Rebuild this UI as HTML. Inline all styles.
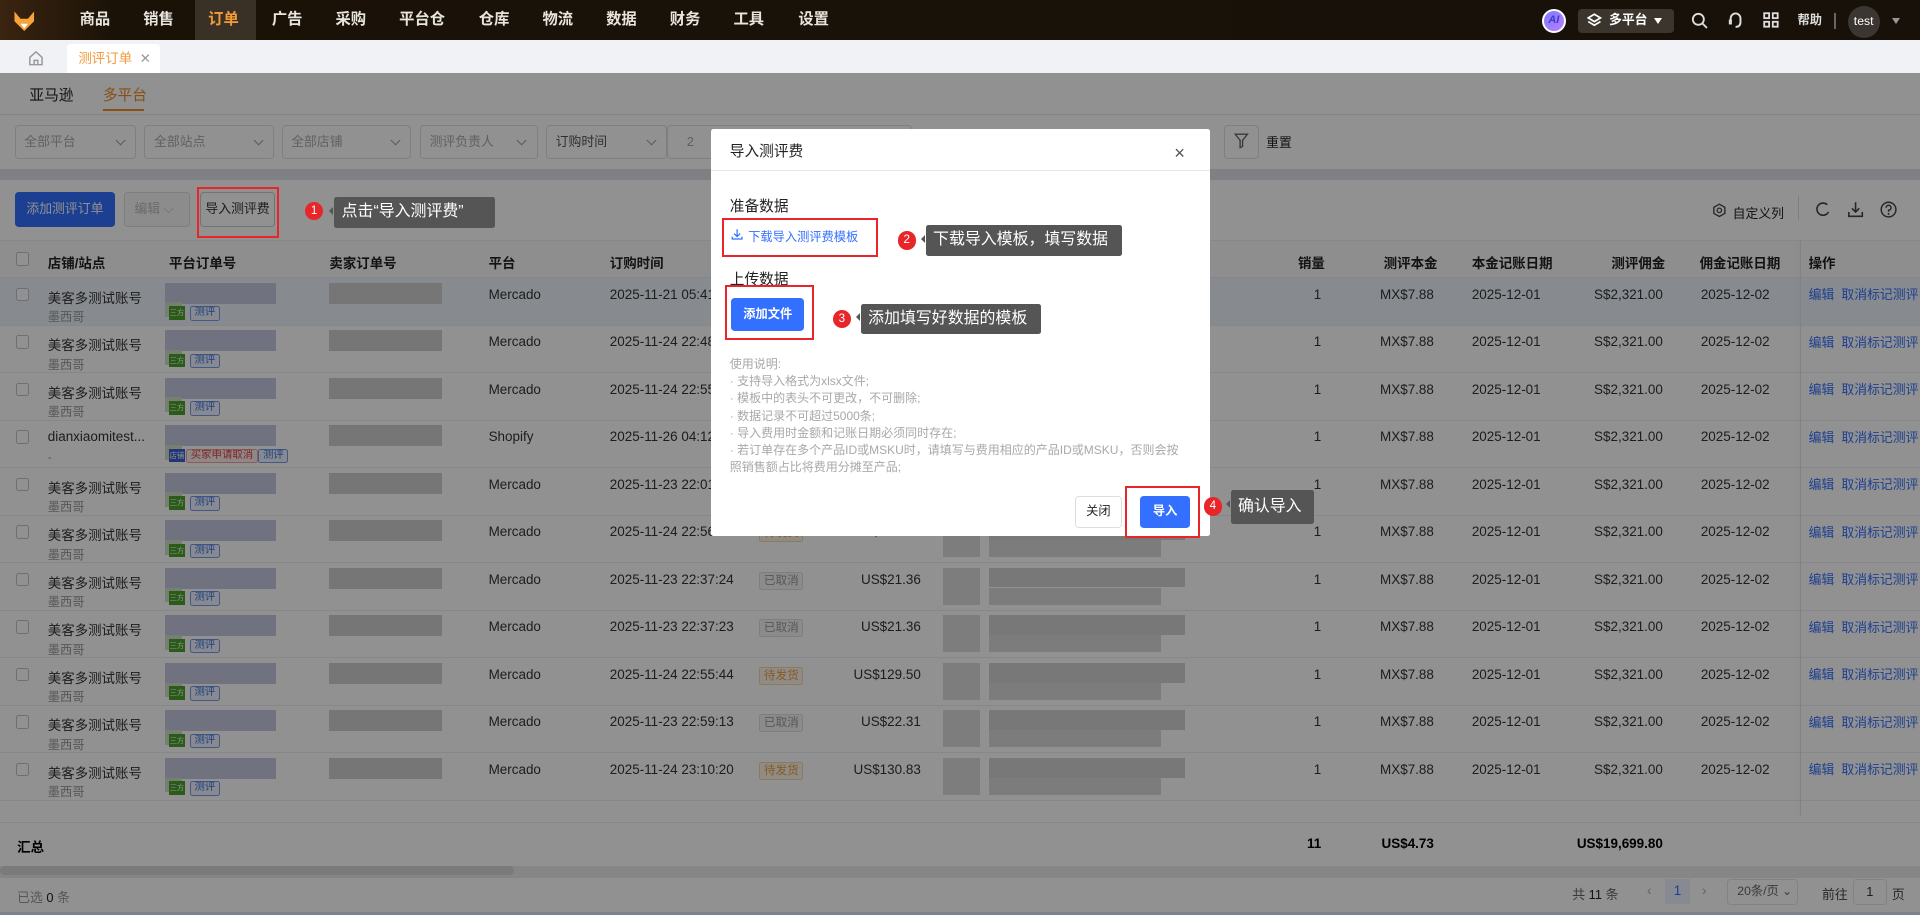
<!DOCTYPE html>
<html><head><meta charset="utf-8">
<style>
*{box-sizing:border-box;margin:0;padding:0}
html,body{width:1920px;height:915px;overflow:hidden;background:#fff}
body{font-family:"Liberation Sans","Noto Sans CJK SC",sans-serif;color:#333}
#w{position:absolute;left:0;top:0;width:1568px;height:747px;zoom:1.22449;overflow:hidden;background:#fff}
.a{position:absolute;white-space:nowrap}
#nav{position:absolute;left:0;top:0;width:1568px;height:33px;background:linear-gradient(90deg,#3a2410 0,#1a1207 6%,#17110a 100%)}
#nav .m{position:absolute;top:0;height:33px;line-height:33px;color:#e8e4de;font-size:12.5px;font-weight:bold}
#tabs{position:absolute;left:0;top:33px;width:1568px;height:27px;background:#f0f2f5}
.sel{position:absolute;top:102px;height:28px;border:1px solid #dcdfe6;border-radius:3px;background:#fff;font-size:10.5px;color:#aaa;line-height:26px;padding-left:7px}
.sel:after{content:"";position:absolute;right:9px;top:9px;width:5px;height:5px;border-right:1px solid #999;border-bottom:1px solid #999;transform:rotate(45deg)}
.th{position:absolute;top:206px;font-size:11px;font-weight:bold;color:#222}
.row{position:absolute;left:0;width:1568px;height:39px;border-bottom:1px solid #ebeef5;font-size:11px;color:#333}
.row .a{top:7px}
.cb{position:absolute;left:13px;width:11px;height:11px;border:1px solid #c0c4cc;border-radius:2px;background:#fff}
.blur{position:absolute;background:#c6cbe0}
.blur2{position:absolute;background:#cfcfcf}
.tg3{position:absolute;width:13px;height:11px;background:#4aa02c;color:#fff;font-size:6px;line-height:11px;text-align:center}
.tgc{position:absolute;height:12px;border:1px solid #7a9ae8;border-radius:2px;color:#3a6fe0;font-size:8.5px;line-height:10px;padding:0 3px;background:#eef3ff}
.st{position:absolute;height:15px;border:1px solid #ddd;border-radius:2px;font-size:9.5px;line-height:13px;padding:0 3px;color:#999;background:#f5f5f5}
.st.o{color:#e8a040;border-color:#f6d6a8;background:#fdf5e8}
.lk{color:#3370ff}
#ov{position:absolute;left:0;top:60px;width:1568px;height:687px;background:rgba(0,0,0,.43)}
#md{position:absolute;left:581px;top:105px;width:407px;height:333px;background:#fff;border-radius:2px}
.red{position:absolute;border:2px solid #e8262a}
.num{position:absolute;width:15px;height:15px;border-radius:50%;background:#e8262a;color:#fff;font-size:9.5px;line-height:15px;text-align:center}
.tip{position:absolute;height:25px;background:#555;border-radius:2px;color:#fff;font-size:13px;line-height:25px;padding:0 6px}
.tip:before{content:"";position:absolute;left:-4px;top:8px;border-right:4px solid #555;border-top:4px solid transparent;border-bottom:4px solid transparent}
.ins{position:absolute;left:595px;font-size:9.8px;color:#a8a8a8}
</style></head><body><div id="w">

<div id="nav">
 <svg class="a" style="left:10px;top:7px" width="20" height="20" viewBox="0 0 20 20"><path d="M2 2 L7 8 L13 8 L18 2 L18 10 L10 18 L2 10Z" fill="#f5a33a"/><path d="M7 12 L10 16 L13 12Z" fill="#fff"/></svg>
 <div class="m" style="left:65px">商品</div>
 <div class="m" style="left:117px">销售</div>
 <div class="a" style="left:159px;top:0;width:50px;height:33px;background:#3a3126"></div>
 <div class="m" style="left:170px;color:#f29b38">订单</div>
 <div class="m" style="left:222px">广告</div>
 <div class="m" style="left:274px">采购</div>
 <div class="m" style="left:326px">平台仓</div>
 <div class="m" style="left:391px">仓库</div>
 <div class="m" style="left:443px">物流</div>
 <div class="m" style="left:495px">数据</div>
 <div class="m" style="left:547px">财务</div>
 <div class="m" style="left:599px">工具</div>
 <div class="m" style="left:652px">设置</div>
 <div class="a" style="left:1259px;top:7px;width:20px;height:20px;border-radius:50%;background:linear-gradient(135deg,#7b7bff,#c07cff);border:2px solid #fff;color:#3b3bcf;font-size:9px;font-weight:bold;text-align:center;line-height:16px;font-style:italic">AI</div>
 <div class="a" style="left:1289px;top:7px;width:78px;height:20px;background:#3b352e;border-radius:3px"></div>
 <svg class="a" style="left:1296px;top:11px" width="12" height="12" viewBox="0 0 12 12"><path d="M6 1 L11 4 L6 7 L1 4Z M1 7 L6 10 L11 7" fill="none" stroke="#fff" stroke-width="1.4"/></svg>
 <div class="m" style="left:1314px;font-size:10.5px;color:#fff">多平台</div>
 <div class="a" style="left:1351px;top:15px;border-left:4px solid transparent;border-right:4px solid transparent;border-top:5px solid #fff"></div>
 <svg class="a" style="left:1381px;top:10px" width="14" height="14" viewBox="0 0 14 14"><circle cx="6" cy="6" r="4.5" fill="none" stroke="#ddd" stroke-width="1.5"/><path d="M9.5 9.5 L13 13" stroke="#ddd" stroke-width="1.5"/></svg>
 <svg class="a" style="left:1410px;top:9px" width="14" height="15" viewBox="0 0 14 15"><path d="M3 9 V6 A4 4 0 0 1 11 6 V9 M11 9 Q11 13 7 13" fill="none" stroke="#ddd" stroke-width="1.6"/><rect x="1.5" y="7" width="2.5" height="4" fill="#ddd"/></svg>
 <svg class="a" style="left:1440px;top:10px" width="13" height="13" viewBox="0 0 13 13"><g fill="none" stroke="#ddd" stroke-width="1.5"><rect x="1" y="1" width="4" height="4"/><rect x="8" y="1" width="4" height="4"/><rect x="1" y="8" width="4" height="4"/><rect x="8" y="8" width="4" height="4"/></g></svg>
 <div class="m" style="left:1468px;font-size:10px;color:#ddd">帮助</div>
 <div class="a" style="left:1498px;top:11px;width:1px;height:13px;background:#666"></div>
 <div class="a" style="left:1509px;top:5px;width:26px;height:26px;border-radius:50%;background:#3b3631;color:#fff;font-size:10px;line-height:26px;text-align:center">test</div>
 <div class="a" style="left:1545px;top:15px;border-left:4px solid transparent;border-right:4px solid transparent;border-top:5px solid #999"></div>
</div>

<div id="tabs">
 <svg class="a" style="left:23px;top:8px" width="13" height="13" viewBox="0 0 13 13"><path d="M1.5 6 L6.5 1.5 L11.5 6 V12 H1.5Z M5 12 V8.5 H8 V12" fill="none" stroke="#999" stroke-width="1.2"/></svg>
 <div class="a" style="left:55px;top:3px;width:76px;height:24px;background:#fff;border-radius:3px 3px 0 0;font-size:11px;color:#f39a3c;line-height:24px;padding-left:9px">测评订单 <span style="color:#999;margin-left:3px">✕</span></div>
</div>

<div class="a" style="left:24px;top:69px;font-size:12px;color:#222">亚马逊</div>
<div class="a" style="left:84px;top:69px;font-size:12px;color:#f08a24">多平台</div>
<div class="a" style="left:84px;top:89px;width:34px;height:2px;background:#f08a24"></div>
<div class="a" style="left:0;top:93px;width:1568px;height:1px;background:#e8e8e8"></div>
<div class="sel" style="left:12px;width:99px">全部平台</div>
<div class="sel" style="left:118px;width:106px">全部站点</div>
<div class="sel" style="left:230px;width:106px">全部店铺</div>
<div class="sel" style="left:343px;width:96px">测评负责人</div>
<div class="sel" style="left:446px;width:99px;color:#555">订购时间</div>
<div class="sel" style="left:545px;width:200px"><span style="margin-left:8px">2</span></div>
<div class="a" style="left:1000px;top:102px;width:28px;height:28px;border:1px solid #dcdfe6;border-radius:3px;background:#fff"></div>
<svg class="a" style="left:1008px;top:109px" width="12" height="13" viewBox="0 0 12 13"><path d="M1 1 H11 L7 6 V11 L5 12 V6Z" fill="none" stroke="#666" stroke-width="1.1"/></svg>
<div class="a" style="left:1034px;top:108px;font-size:10.5px;color:#222">重置</div>
<div class="a" style="left:0;top:138px;width:1568px;height:9px;background:#e0e2e7"></div>
<div class="a" style="left:12px;top:157px;width:82px;height:28px;background:#3370ff;border-radius:3px;color:#fff;font-size:10.5px;line-height:28px;text-align:center">添加测评订单</div>
<div class="a" style="left:101px;top:157px;width:54px;height:28px;border:1px solid #ddd;border-radius:3px;color:#bbb;font-size:10.5px;line-height:26px;padding-left:8px;background:#f6f6f6">编辑 ⌵</div>
<div class="a" style="left:163px;top:157px;width:62px;height:28px;border:1px solid #ccc;border-radius:3px;color:#333;font-size:10.5px;line-height:26px;text-align:center;background:#fff">导入测评费</div>
<svg class="a" style="left:1398px;top:166px" width="12" height="12" viewBox="0 0 12 12"><path d="M6 1 L10.5 3.5 V8.5 L6 11 L1.5 8.5 V3.5Z" fill="none" stroke="#444" stroke-width="1.1"/><circle cx="6" cy="6" r="1.8" fill="none" stroke="#444"/></svg>
<div class="a" style="left:1415px;top:166px;font-size:10.5px;color:#222">自定义列</div>
<div class="a" style="left:1468px;top:160px;width:1px;height:20px;background:#ddd"></div>
<svg class="a" style="left:1482px;top:164px" width="13" height="14" viewBox="0 0 13 14"><path d="M10 3 A5 5 0 1 0 11 9" fill="none" stroke="#444" stroke-width="1.3"/></svg>
<svg class="a" style="left:1508px;top:164px" width="14" height="14" viewBox="0 0 14 14"><path d="M7 1 V9 M4 6 L7 9 L10 6 M1.5 9 V12.5 H12.5 V9" fill="none" stroke="#444" stroke-width="1.3"/></svg>
<svg class="a" style="left:1535px;top:164px" width="14" height="14" viewBox="0 0 14 14"><circle cx="7" cy="7" r="6" fill="none" stroke="#444" stroke-width="1.2"/><path d="M5 5.5 A2 2 0 1 1 7 7.5 V8.8" fill="none" stroke="#444" stroke-width="1.2"/><circle cx="7" cy="10.5" r=".8" fill="#444"/></svg>

<div class="a" style="left:0;top:196px;width:1568px;height:31px;background:#fafafa;border-top:1px solid #ebeef5;border-bottom:1px solid #ebeef5"></div>
<div class="cb" style="top:206px"></div>
<div class="th" style="left:39px">店铺/站点</div>
<div class="th" style="left:138px">平台订单号</div>
<div class="th" style="left:269px">卖家订单号</div>
<div class="th" style="left:399px">平台</div>
<div class="th" style="left:498px">订购时间</div>
<div class="th" style="left:1060px">销量</div>
<div class="th" style="left:1130px">测评本金</div>
<div class="th" style="left:1202px">本金记账日期</div>
<div class="th" style="left:1316px">测评佣金</div>
<div class="th" style="left:1388px">佣金记账日期</div>
<div class="th" style="left:1477px">操作</div>

<div id="rows"></div>
<script>
var d=[["美客多测试账号","墨西哥","Mercado","2025-11-21 05:41:22","","",1],
["美客多测试账号","墨西哥","Mercado","2025-11-24 22:48:10","","",0],
["美客多测试账号","墨西哥","Mercado","2025-11-24 22:55:44","","",0],
["dianxiaomitest...","-","Shopify","2025-11-26 04:12:30","","",2],
["美客多测试账号","墨西哥","Mercado","2025-11-23 22:01:13","","",0],
["美客多测试账号","墨西哥","Mercado","2025-11-24 22:56:44","待发货","US$129.50",0],
["美客多测试账号","墨西哥","Mercado","2025-11-23 22:37:24","已取消","US$21.36",0],
["美客多测试账号","墨西哥","Mercado","2025-11-23 22:37:23","已取消","US$21.36",0],
["美客多测试账号","墨西哥","Mercado","2025-11-24 22:55:44","待发货","US$129.50",0],
["美客多测试账号","墨西哥","Mercado","2025-11-23 22:59:13","已取消","US$22.31",0],
["美客多测试账号","墨西哥","Mercado","2025-11-24 23:10:20","待发货","US$130.83",0]];
var h="";
d.forEach(function(r,i){
 var y=227+i*38.8;
 h+='<div class="row" style="top:'+y+'px;'+(r[6]==1?'background:#eef3fb':'')+'">';
 h+='<div class="cb" style="top:8px"></div>';
 h+='<div class="a" style="left:39px">'+r[0]+'</div>';
 h+='<div class="a" style="left:39px;top:24px;font-size:10px;color:#999">'+r[1]+'</div>';
 h+='<div class="blur" style="left:135px;top:4px;width:90px;height:17px"></div>';
 h+='<div class="blur" style="left:135px;top:20px;width:14px;height:12px;background:#cfe0c8"></div>';
 if(r[6]==2){h+='<div class="tg3" style="left:138px;top:23px;background:#3a5fcf">店铺</div><div class="tgc" style="left:152px;top:23px;border-color:#f2a0a0;color:#e04040;background:#fdeeee">买家申请取消</div><div class="tgc" style="left:211px;top:23px">测评</div>';}
 else{h+='<div class="tg3" style="left:138px;top:23px">三方</div><div class="tgc" style="left:155px;top:23px">测评</div>';}
 h+='<div class="blur2" style="left:269px;top:4px;width:92px;height:17px"></div>';
 h+='<div class="a" style="left:399px">'+r[2]+'</div>';
 h+='<div class="a" style="left:498px">'+r[3]+'</div>';
 if(r[4])h+='<div class="st'+(r[4]=="待发货"?" o":"")+'" style="left:620px;top:7px">'+r[4]+'</div>';
 if(r[5])h+='<div class="a" style="right:816px">'+r[5]+'</div>';
 h+='<div class="blur2" style="left:770px;top:4px;width:30px;height:30px;background:#dcdcdc"></div>';
 h+='<div class="blur2" style="left:808px;top:4px;width:160px;height:16px;background:#d4d4d4"></div>';
 h+='<div class="blur2" style="left:808px;top:20px;width:140px;height:14px;background:#dadada"></div>';
 h+='<div class="a" style="right:489px">1</div>';
 h+='<div class="a" style="right:397px">MX$7.88</div>';
 h+='<div class="a" style="left:1202px">2025-12-01</div>';
 h+='<div class="a" style="right:210px">S$2,321.00</div>';
 h+='<div class="a" style="left:1389px">2025-12-02</div>';
 h+='<div class="a lk" style="left:1477px;top:5px;font-size:10.5px">编辑 &nbsp;取消标记测评</div>';
 h+='</div>';
});
document.getElementById("rows").innerHTML=h;
</script>
<div class="a" style="left:1470px;top:196px;width:1px;height:470px;background:#e4e4e4;box-shadow:-2px 0 4px rgba(0,0,0,.08)"></div>
<div class="a" style="left:0;top:671px;width:1568px;height:1px;background:#ebeef5"></div>
<div class="a" style="left:14px;top:683px;font-size:11px;font-weight:bold;color:#000">汇总</div>
<div class="a" style="right:489px;top:683px;font-size:11px;font-weight:bold;color:#000">11</div>
<div class="a" style="right:397px;top:683px;font-size:11px;font-weight:bold;color:#000">US$4.73</div>
<div class="a" style="right:210px;top:683px;font-size:11px;font-weight:bold;color:#000">US$19,699.80</div>
<div class="a" style="left:0;top:707px;width:1568px;height:10px;background:#ececec"></div>
<div class="a" style="left:0;top:707px;width:420px;height:8px;background:#d6d6d6;border-radius:4px"></div>
<div class="a" style="left:14px;top:724px;font-size:10.5px;color:#999">已选 <span style="color:#222">0</span> 条</div>
<div class="a" style="left:1284px;top:722px;font-size:10.5px;color:#666">共 <span style="color:#222">11</span> 条</div>
<div class="a" style="left:1345px;top:721px;font-size:11px;color:#aaa">‹</div>
<div class="a" style="left:1360px;top:718px;width:20px;height:20px;background:#eef3ff;color:#3370ff;font-size:11px;text-align:center;line-height:20px">1</div>
<div class="a" style="left:1390px;top:721px;font-size:11px;color:#aaa">›</div>
<div class="a" style="left:1410px;top:718px;width:58px;height:21px;border:1px solid #e5e5e5;border-radius:3px;font-size:10px;color:#666;line-height:19px;padding-left:8px;background:#fff">20条/页 ⌄</div>
<div class="a" style="left:1488px;top:722px;font-size:10.5px;color:#444">前往</div>
<div class="a" style="left:1513px;top:718px;width:28px;height:21px;border:1px solid #e5e5e5;border-radius:3px;font-size:10.5px;text-align:center;line-height:19px;background:#fff">1</div>
<div class="a" style="left:1545px;top:722px;font-size:10.5px;color:#444">页</div>
<div class="a" style="left:0;top:745px;width:1568px;height:2px;background:#dde6f5"></div>

<div id="ov"></div>

<div id="md">
 <div class="a" style="left:15px;top:9px;font-size:12px;color:#222">导入测评费</div>
 <div class="a" style="left:378px;top:12px;font-size:15px;color:#555;line-height:16px">×</div>
 <div class="a" style="left:0;top:34px;width:407px;height:1px;background:#e5e5e5"></div>
 <div class="a" style="left:15px;top:54px;font-size:12px;color:#222">准备数据</div>
 <svg class="a" style="left:16px;top:81px" width="10" height="10" viewBox="0 0 10 10"><path d="M5 1 V7 M2.5 4.5 L5 7 L7.5 4.5 M1 7 V9 H9 V7" fill="none" stroke="#3370ff" stroke-width="1"/></svg>
 <div class="a lk" style="left:30px;top:80px;font-size:10px">下载导入测评费模板</div>
 <div class="a" style="left:15px;top:114px;font-size:12px;color:#222">上传数据</div>
 <div class="a" style="left:16px;top:138px;width:60px;height:27px;background:#3370ff;border-radius:3px;color:#fff;font-size:10px;font-weight:bold;line-height:27px;text-align:center">添加文件</div>
 <div class="ins" style="left:15px;top:185px">使用说明:</div>
 <div class="ins" style="left:15px;top:199px">· 支持导入格式为xlsx文件;</div>
 <div class="ins" style="left:15px;top:213px">· 模板中的表头不可更改，不可删除;</div>
 <div class="ins" style="left:15px;top:227px">· 数据记录不可超过5000条;</div>
 <div class="ins" style="left:15px;top:241px">· 导入费用时金额和记账日期必须同时存在;</div>
 <div class="ins" style="left:15px;top:255px">· 若订单存在多个产品ID或MSKU时，请填写与费用相应的产品ID或MSKU，否则会按</div>
 <div class="ins" style="left:15px;top:269px">照销售额占比将费用分摊至产品;</div>
 <div class="a" style="left:297px;top:300px;width:38px;height:26px;border:1px solid #ddd;border-radius:3px;font-size:10px;color:#222;line-height:24px;text-align:center">关闭</div>
 <div class="a" style="left:350px;top:300px;width:41px;height:26px;background:#3370ff;border-radius:3px;font-size:10px;color:#fff;font-weight:bold;line-height:26px;text-align:center">导入</div>
</div>

<div class="red" style="left:161px;top:153px;width:67px;height:41px"></div>
<div class="num" style="left:249px;top:165px">1</div>
<div class="tip" style="left:273px;top:161px;width:131px">点击“导入测评费”</div>
<div class="red" style="left:590px;top:178px;width:127px;height:32px"></div>
<div class="num" style="left:733px;top:189px">2</div>
<div class="tip" style="left:756px;top:184px;width:160px">下载导入模板，填写数据</div>
<div class="red" style="left:592px;top:233px;width:73px;height:45px"></div>
<div class="num" style="left:680px;top:253px">3</div>
<div class="tip" style="left:703px;top:248px;width:147px">添加填写好数据的模板</div>
<div class="red" style="left:919px;top:397px;width:61px;height:42px"></div>
<div class="num" style="left:983px;top:406px">4</div>
<div class="tip" style="left:1005px;top:400px;width:68px;height:28px;line-height:28px">确认导入</div>

</div></body></html>
